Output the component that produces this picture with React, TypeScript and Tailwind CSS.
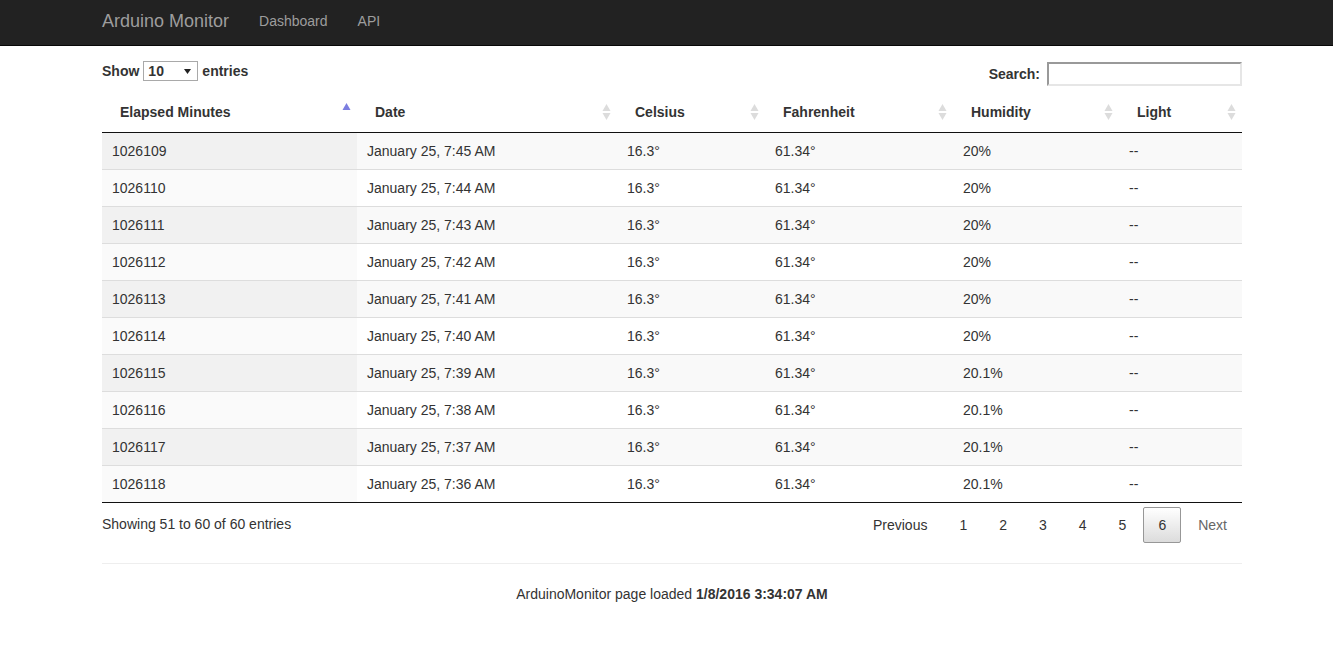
import React from 'react';

type SortState = 'asc' | 'both';

const COLUMNS: { label: string; width: string; sort: SortState }[] = [
  { label: 'Elapsed Minutes', width: 'w-[255px]', sort: 'asc' },
  { label: 'Date', width: 'w-[260px]', sort: 'both' },
  { label: 'Celsius', width: 'w-[148px]', sort: 'both' },
  { label: 'Fahrenheit', width: 'w-[188px]', sort: 'both' },
  { label: 'Humidity', width: 'w-[166px]', sort: 'both' },
  { label: 'Light', width: 'w-[123px]', sort: 'both' },
];

const ROWS = [
  ['1026109', 'January 25, 7:45 AM', '16.3°', '61.34°', '20%', '--'],
  ['1026110', 'January 25, 7:44 AM', '16.3°', '61.34°', '20%', '--'],
  ['1026111', 'January 25, 7:43 AM', '16.3°', '61.34°', '20%', '--'],
  ['1026112', 'January 25, 7:42 AM', '16.3°', '61.34°', '20%', '--'],
  ['1026113', 'January 25, 7:41 AM', '16.3°', '61.34°', '20%', '--'],
  ['1026114', 'January 25, 7:40 AM', '16.3°', '61.34°', '20%', '--'],
  ['1026115', 'January 25, 7:39 AM', '16.3°', '61.34°', '20.1%', '--'],
  ['1026116', 'January 25, 7:38 AM', '16.3°', '61.34°', '20.1%', '--'],
  ['1026117', 'January 25, 7:37 AM', '16.3°', '61.34°', '20.1%', '--'],
  ['1026118', 'January 25, 7:36 AM', '16.3°', '61.34°', '20.1%', '--'],
];

function SortIcon({ sort }: { sort: SortState }) {
  if (sort === 'asc') {
    return (
      <svg width="9" height="19" viewBox="0 0 9 19" className="absolute right-[6px] top-[10px]">
        <polygon points="4.5,1 8.5,8 0.5,8" fill="#7c7ee0" />
      </svg>
    );
  }
  return (
    <svg width="9" height="19" viewBox="0 0 9 19" className="absolute right-[6px] top-[11px]">
      <polygon points="4.5,1 8.5,8 0.5,8" fill="#dcdcdc" />
      <polygon points="0.5,10 8.5,10 4.5,17" fill="#dcdcdc" />
    </svg>
  );
}

function PageButton({ label, current, disabled }: { label: string; current?: boolean; disabled?: boolean }) {
  return (
    <span
      className={
        'ml-[2px] box-border inline-block rounded-[2px] border px-[14px] py-[7px] leading-5 ' +
        (current
          ? 'border-[#979797] bg-gradient-to-b from-white to-[#dcdcdc] text-[#333]'
          : disabled
            ? 'border-transparent text-[#666]'
            : 'border-transparent text-[#333]')
      }
    >
      {label}
    </span>
  );
}

export default function App() {
  return (
    <div className="min-h-screen bg-white text-[14px] leading-5 text-[#333] font-['Liberation_Sans',Arial,sans-serif]">
      <nav className="h-[46px] border-b border-[#080808] bg-[#222]">
        <div className="ml-[102px] flex h-[42px] w-[1140px] items-center">
          <span className="text-[18px] text-[#9d9d9d]">Arduino Monitor</span>
          <span className="ml-[30px] text-[#9d9d9d]">Dashboard</span>
          <span className="ml-[30px] text-[#9d9d9d]">API</span>
        </div>
      </nav>

      <div className="ml-[102px] w-[1140px]">
        <div className="mt-[15px] flex items-start justify-between">
          <label className="flex h-5 items-center font-bold">
            Show
            <span className="mx-[4px] flex h-5 w-[55px] items-center justify-between border border-[#a9a9a9] bg-white pl-[4px] pr-[6px] font-normal text-black">
              <span className="font-bold text-[#333]">10</span>
              <svg width="7" height="5" viewBox="0 0 7 5">
                <polygon points="0,0 7,0 3.5,5" fill="#222" />
              </svg>
            </span>
            entries
          </label>
          <label className="mt-px flex h-6 items-center font-bold">
            Search:
            <span className="ml-[7px] box-border block h-6 w-[195px] border-2 border-t-[#999] border-l-[#999] border-r-[#e6e6e6] border-b-[#e6e6e6] bg-white" />
          </label>
        </div>

        <table className="mt-[6px] w-full table-fixed border-collapse">
          <thead>
            <tr>
              {COLUMNS.map(col => (
                <th
                  key={col.label}
                  className={`${col.width} relative border-b border-[#111] py-[10px] pl-[18px] pr-[18px] text-left font-bold`}
                >
                  {col.label}
                  <SortIcon sort={col.sort} />
                </th>
              ))}
            </tr>
          </thead>
          <tbody>
            {ROWS.map((row, i) => {
              const odd = i % 2 === 0;
              return (
                <tr key={row[0]} className={odd ? 'bg-[#f9f9f9]' : 'bg-white'}>
                  {row.map((cell, j) => (
                    <td
                      key={j}
                      className={
                        'px-[10px] py-2 ' +
                        (i > 0 ? 'border-t border-[#ddd] ' : '') +
                        (i === ROWS.length - 1 ? 'border-b border-b-[#111] ' : '') +
                        (j === 0 ? (odd ? 'bg-[#f1f1f1]' : 'bg-[#fafafa]') : '')
                      }
                    >
                      {cell}
                    </td>
                  ))}
                </tr>
              );
            })}
          </tbody>
        </table>

        <div className="flex items-start justify-between">
          <div className="pt-[11px]">Showing 51 to 60 of 60 entries</div>
          <div className="flex pt-[4px]">
            <PageButton label="Previous" />
            <PageButton label="1" />
            <PageButton label="2" />
            <PageButton label="3" />
            <PageButton label="4" />
            <PageButton label="5" />
            <PageButton label="6" current />
            <PageButton label="Next" disabled />
          </div>
        </div>

        <hr className="mt-5 border-t border-[#eee]" />

        <footer className="mt-5 text-center">
          ArduinoMonitor page loaded <strong>1/8/2016 3:34:07 AM</strong>
        </footer>
      </div>
    </div>
  );
}
